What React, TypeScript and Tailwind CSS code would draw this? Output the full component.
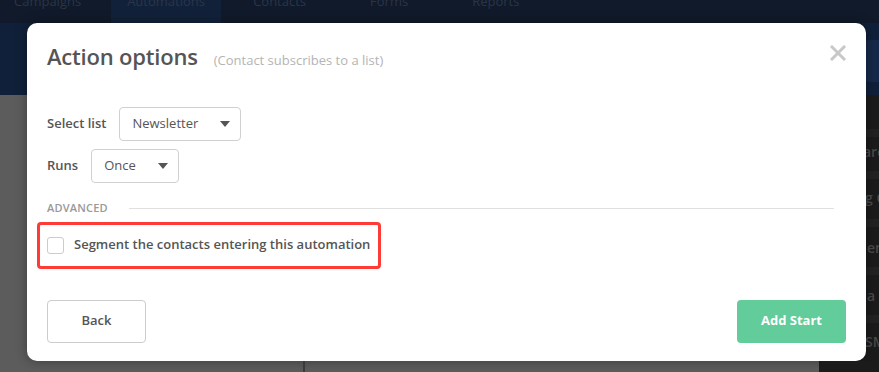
import React from "react";

function Caret() {
  return (
    <svg width="10" height="6" viewBox="0 0 10 6" className="shrink-0">
      <path d="M0 0 L10 0 L5 6 Z" fill="#555" />
    </svg>
  );
}

function SelectBox({ value, width }: { value: string; width: string }) {
  return (
    <div
      className={`flex h-[34px] items-center justify-between rounded-[4px] border border-[#d0d0d0] bg-white pl-3 pr-[10px] text-[13px] text-[#555] ${width}`}
    >
      <span>{value}</span>
      <Caret />
    </div>
  );
}

export default function App() {
  return (
    <div
      className="relative h-[372px] w-[879px] overflow-hidden bg-[#5b5b5b]"
      style={{ fontFamily: '"Open Sans", "Noto Sans", sans-serif' }}
    >
      {/* Page behind the overlay */}
      <div className="flex h-[23px] items-start whitespace-nowrap bg-[#111a2a] text-[13px] text-[#2a3548]">
        <span className="-mt-[8px] pl-[14px] pr-[30px]">Campaigns</span>
        <span className="-mt-[8px] h-[31px] w-[110px] bg-[#12213a] px-4 pt-0">Automations</span>
        <span className="-mt-[8px] px-8">Contacts</span>
        <span className="-mt-[8px] px-8">Forms</span>
        <span className="-mt-[8px] px-8">Reports</span>
      </div>
      <div className="flex h-[72px] bg-[#10203a]">
        <div className="flex-1" />
        <div className="mr-[-6px] mt-[17px] h-[42px] w-[20px] rounded-[4px] bg-[#17294a]" />
      </div>
      <div className="flex h-[277px]">
        <div className="flex-1 bg-[#5c5c5c]" />
        <div className="flex w-[60px] flex-col whitespace-nowrap bg-[#1b1b1b] pt-[34px] text-[14px] font-semibold text-[#4a4a4a]">
          <div className="h-[8px] bg-[#222]" />
          <div className="h-[34px] pl-[44px] pt-[4px]">arc</div>
          <div className="h-[8px] bg-[#222]" />
          <div className="h-[40px] pl-[46px] pt-[8px]">g C</div>
          <div className="h-[8px] bg-[#222]" />
          <div className="h-[40px] pl-[48px] pt-[10px]">em</div>
          <div className="h-[8px] bg-[#222]" />
          <div className="h-[40px] pl-[48px] pt-[10px]">a s</div>
          <div className="h-[8px] bg-[#222]" />
          <div className="pl-[46px] pt-[8px]">SM</div>
        </div>
      </div>

      {/* Modal */}
      <div className="absolute left-[27px] top-[23px] flex h-[338px] w-[839px] flex-col rounded-[10px] bg-white px-5 pt-[17px] shadow-[0_0_12px_rgba(0,0,0,0.35)]">
        <div className="flex items-start justify-between">
          <div className="flex items-baseline">
            <h1 className="text-[22px] font-semibold tracking-[-0.2px] text-[#555]">Action options</h1>
            <span className="ml-[16px] text-[13px] text-[#b4b4b4]">(Contact subscribes to a list)</span>
          </div>
          <svg width="16" height="16" viewBox="0 0 16 16" className="mt-[5px]">
            <path d="M2 2 L14 14 M14 2 L2 14" stroke="#c8c8c8" strokeWidth="3" strokeLinecap="square" />
          </svg>
        </div>

        <div className="mt-[34px] flex items-center gap-[13px]">
          <span className="text-[13px] font-semibold text-[#555]">Select list</span>
          <SelectBox value="Newsletter" width="w-[122px]" />
        </div>
        <div className="mt-[8px] flex items-center gap-[13px]">
          <span className="text-[13px] font-semibold text-[#555]">Runs</span>
          <SelectBox value="Once" width="w-[88px]" />
        </div>

        <div className="mt-[17px] flex items-center gap-[21px] pr-[12px]">
          <span className="text-[11px] font-semibold tracking-[0.2px] text-[#999]">ADVANCED</span>
          <div className="h-px flex-1 bg-[#e0e0e0]" />
        </div>

        <div className="-ml-[10px] mt-[5px] flex h-[47px] w-[344px] items-center gap-[10px] rounded-[4px] border-[3px] border-[#ff3b36] pl-[7px]">
          <div className="h-[17px] w-[17px] rounded-[3px] border border-[#ccc] bg-white" />
          <span className="text-[13px] font-semibold text-[#555]">Segment the contacts entering this automation</span>
        </div>

        <div className="mt-[31px] flex justify-between">
          <button className="h-[43px] w-[99px] rounded-[4px] border border-[#ccc] bg-white text-[13px] font-semibold text-[#555]">
            Back
          </button>
          <button className="h-[43px] w-[109px] rounded-[4px] bg-[#62cc9a] text-[13px] font-bold text-white">
            Add Start
          </button>
        </div>
      </div>

      {/* Bottom strip below modal */}
      <div className="absolute bottom-0 left-[303px] h-[11px] w-[2px] bg-[#3a3a3a]" />
      <div className="absolute bottom-0 left-[820px] h-[11px] w-[59px] bg-[#1b1b1b]" />
    </div>
  );
}
